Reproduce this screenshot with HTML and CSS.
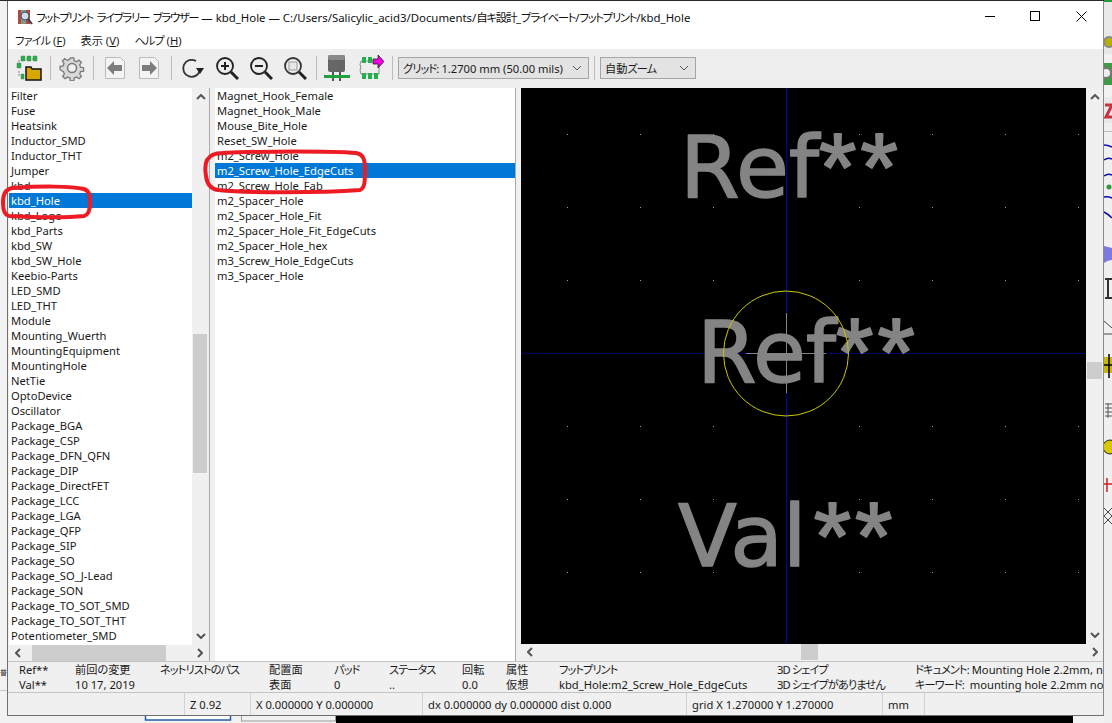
FILE: index.html
```html
<!DOCTYPE html>
<html lang="ja">
  <head>
    <meta charset="UTF-8" />
    <title>フットプリント ライブラリー ブラウザー</title>
    <link rel="stylesheet" href="styles.css">
  </head>
  <body>
    <svg class="backdrop" width="1112" height="723" viewBox="0 0 1112 723">
      <rect width="1112" height="723" fill="#f2f2f2" />
      <rect width="1112" height="1" fill="#2a2a2a" />
      <rect x="1104" width="8" height="2" fill="#1e9e3a" />
      <rect x="0" y="690" width="8" height="1" fill="#c8c8c8" />
      <text x="0" y="675" font-size="7" font-family="Noto Sans CJK JP, sans-serif" fill="#222">普</text>
      <rect x="145.500" y="712" width="85" height="8" fill="#fff" stroke="#1f5fa8" stroke-width="1.500" />
      <rect x="241.500" y="712" width="94" height="9" fill="#f2f2f2" stroke="#9a9a9a" />
      <rect x="336" y="715" width="737" height="8" fill="#000" />
      <rect x="1104" y="2" width="8" height="52" fill="#e8e8e8" />
      <circle cx="1109" cy="42" r="5" fill="#b8b000" stroke="#888" stroke-width="2" />
      <rect x="1104" y="63" width="8" height="22" fill="#3f9a48" />
      <circle cx="1106" cy="73" r="5" fill="#eee" stroke="#777" stroke-width="2" />
      <rect x="1104" y="97" width="8" height="26" fill="#e9e9e9" />
      <path d="M1105 105h7l-6 12h6" fill="none" stroke="#c8323c" stroke-width="3" />
      <rect x="1104" y="123" width="8" height="600" fill="#f0f0f0" />
      <rect x="1104" y="131" width="8" height="1" fill="#bbb" />
      <path d="M1104 145q4 0 8 2M1104 160q4-3 8-1M1104 176q4-3 8-1M1104 197q4-1 8 1M1104 212q4 2 8 6" fill="none" stroke="#0a0ab0" stroke-width="1.500" />
      <circle cx="1109" cy="187" r="2.500" fill="#2a9a3a" />
      <path d="M1104 246q4 1 8 2v12q-4 0-8 3z" fill="#7a7ae0" />
      <path d="M1105 279h7M1105 298h7M1108 279v19" fill="none" stroke="#333" stroke-width="2" />
      <path d="M1104 321l8 7M1104 334h8" fill="none" stroke="#444" />
      <rect x="1104" y="357" width="8" height="16" fill="#c8b800" />
      <path d="M1109 354v24M1104 365h8" stroke="#000" stroke-width="1.500" />
      <path d="M1105 404h7M1105 408h7M1105 412h7M1105 416h7M1108 403v15" stroke="#555" fill="none" />
      <circle cx="1110" cy="447" r="7" fill="#d8c800" stroke="#222" />
      <path d="M1104 484h8M1107 478v14" stroke="#d02020" stroke-width="1.500" />
      <path d="M1104 508l8 8M1112 508l-8 8M1104 516l8 8M1112 516l-8 8" stroke="#444" fill="none" />
    </svg>

    <div class="window">
      <div class="titlebar">
        <svg class="app-icon" width="16" height="16" viewBox="0 0 16 16">
          <rect x="1" y="1" width="12" height="14" fill="#b04a3a" />
          <rect x="4" y="1" width="5" height="14" fill="#7a9a8a" />
          <circle cx="8" cy="7" r="4" fill="#cfe0ea" stroke="#34507a" />
          <path d="M11 10l4 5" stroke="#2a3a5a" stroke-width="2" />
        </svg>
        <span class="title-text"><span class="tight">フットプリント ライブラリー ブラウザー</span> — kbd_Hole — C:/Users/Salicylic_acid3/Documents/<span class="tight">自キ設計</span>_<span class="tight">プライベート</span>/<span class="tight">フットプリント</span>/kbd_Hole</span>
        <div class="win-buttons">
          <svg width="46" height="30" viewBox="0 0 46 30"><path d="M13 15.500h10" stroke="#000" /></svg>
          <svg width="46" height="30" viewBox="0 0 46 30"><rect x="12.500" y="10.500" width="9" height="9" fill="none" stroke="#000" /></svg>
          <svg width="46" height="30" viewBox="0 0 46 30"><path d="M12.500 10.500l10 10M22.500 10.500l-10 10" stroke="#000" fill="none" /></svg>
        </div>
      </div>

      <div class="menubar">
        <span><span class="tight">ファイル</span> (<u>F</u>)</span>
        <span>表示 (<u>V</u>)</span>
        <span><span class="tight">ヘルプ</span> (<u>H</u>)</span>
      </div>

      <div class="toolbar">
        <div class="tool">
          <svg width="26" height="26" viewBox="0 0 26 26">
            <path d="M3 5v5M3 16v5M7 4h14" stroke="#888" fill="none" stroke-dasharray="2 1" />
            <path d="M5 1h4v5H5zM11 1h4v5h-4zM17 1h4v5h-4zM1 8h4v5H1zM5 19h3v5H5z" fill="#22b04a" stroke="#5a8a5a" stroke-width="0.500" />
            <path d="M10 12h5l1 2h9v11H10z" fill="#d8a800" stroke="#111" stroke-width="1.500" />
          </svg>
        </div>
        <div class="tool-sep"></div>
        <div class="tool">
          <svg width="26" height="26" viewBox="0 0 26 26">
            <path d="M11 1h4l.6 3.500 2.700 1.100 2.900-2 2.800 2.800-2 2.900 1.100 2.700 3.500.6v4l-3.500.6-1.100 2.700 2 2.900-2.800 2.800-2.900-2-2.700 1.100-.6 3.500h-4l-.6-3.500-2.700-1.100-2.900 2-2.800-2.800 2-2.900-1.100-2.700L-1 15v-4l3.500-.6 1.100-2.700-2-2.900 2.800-2.800 2.900 2 2.700-1.100z" transform="translate(2 2) scale(.85)" fill="#d8d8d8" stroke="#777" stroke-width="1.500" />
            <circle cx="13" cy="13" r="4.500" fill="#f0f0f0" stroke="#777" stroke-width="1.500" />
          </svg>
        </div>
        <div class="tool-sep"></div>
        <div class="tool">
          <svg width="22" height="24" viewBox="0 0 22 24">
            <path d="M1.500 1.500h15l4 4v17h-19z" fill="#f4f4f4" stroke="#bbb" />
            <path d="M3 12l7-7v4h8v6h-8v4z" fill="#7d7d7d" />
          </svg>
        </div>
        <div class="tool">
          <svg width="22" height="24" viewBox="0 0 22 24">
            <path d="M1.500 1.500h15l4 4v17h-19z" fill="#f4f4f4" stroke="#bbb" />
            <path d="M19 12l-7-7v4H4v6h8v4z" fill="#7d7d7d" />
          </svg>
        </div>
        <div class="tool-sep wide"></div>
        <div class="tool">
          <svg width="24" height="24" viewBox="0 0 24 24">
            <path d="M19 14a8.500 8.500 0 1 1-4-9" fill="none" stroke="#333" stroke-width="1.800" />
            <path d="M15 13h8l-4 6z" fill="#222" transform="translate(0 -1)" />
          </svg>
        </div>
        <div class="tool">
          <svg width="24" height="24" viewBox="0 0 24 24">
            <circle cx="10" cy="10" r="8" fill="none" stroke="#222" stroke-width="1.800" />
            <path d="M6 10h8M10 6v8" stroke="#222" stroke-width="2" />
            <path d="M16 16l7 7" stroke="#222" stroke-width="3" />
          </svg>
        </div>
        <div class="tool">
          <svg width="24" height="24" viewBox="0 0 24 24">
            <circle cx="10" cy="10" r="8" fill="none" stroke="#222" stroke-width="1.800" />
            <path d="M6 10h8" stroke="#222" stroke-width="2" />
            <path d="M16 16l7 7" stroke="#222" stroke-width="3" />
          </svg>
        </div>
        <div class="tool">
          <svg width="24" height="24" viewBox="0 0 24 24">
            <circle cx="10" cy="10" r="8" fill="none" stroke="#333" stroke-width="1.800" />
            <rect x="6" y="6" width="8" height="8" fill="#e8e8e8" stroke="#999" />
            <path d="M16 16l7 7" stroke="#222" stroke-width="3" />
          </svg>
        </div>
        <div class="tool-sep thin"></div>
        <div class="tool">
          <svg width="28" height="28" viewBox="0 0 28 28">
            <rect x="5" y="1" width="17" height="17" rx="2" fill="#666" />
            <rect x="5" y="1" width="17" height="5" rx="2" fill="#8a8a8a" />
            <path d="M10 18v3M17 18v3M10 24v3M17 24v3" stroke="#222" stroke-width="1.500" />
            <rect x="1" y="21" width="26" height="3" fill="#1ea03a" />
          </svg>
        </div>
        <div class="tool">
          <svg width="26" height="26" viewBox="0 0 26 26">
            <path d="M3 6q-2 4 0 6-2 3 0 7h18V6z" fill="none" stroke="#888" />
            <path d="M4 2h4v6H4zM10 2h4v6h-4zM4 18h4v6H4zM10 18h4v6h-4zM16 18h4v6h-4z" fill="#22b04a" />
            <path d="M15 4h5V0l6 6.500-6 6.500V9h-5z" fill="#f000e0" stroke="#222" stroke-width="0.800" />
          </svg>
        </div>
        <div class="tool-sep"></div>
        <div class="combo grid-combo">
          <span><span class="tight">グリッド:</span> 1.2700 mm (50.00 mils)</span>
          <svg class="combo-arrow" width="10" height="6" viewBox="0 0 10 6"><path d="M1 1l4 4 4-4" fill="none" stroke="#555" /></svg>
        </div>
        <div class="tool-sep combo-gap"></div>
        <div class="combo zoom-combo">
          <span>自動<span class="tight">ズーム</span></span>
          <svg class="combo-arrow" width="10" height="6" viewBox="0 0 10 6"><path d="M1 1l4 4 4-4" fill="none" stroke="#555" /></svg>
        </div>
      </div>

      <div class="panes">
        <div class="lib-pane">
          <div class="lib-body">
            <ul class="list">
              <li>Filter</li>
              <li>Fuse</li>
              <li>Heatsink</li>
              <li>Inductor_SMD</li>
              <li>Inductor_THT</li>
              <li>Jumper</li>
              <li>kbd</li>
              <li class="selected">kbd_Hole</li>
              <li>kbd_Logo</li>
              <li>kbd_Parts</li>
              <li>kbd_SW</li>
              <li>kbd_SW_Hole</li>
              <li>Keebio-Parts</li>
              <li>LED_SMD</li>
              <li>LED_THT</li>
              <li>Module</li>
              <li>Mounting_Wuerth</li>
              <li>MountingEquipment</li>
              <li>MountingHole</li>
              <li>NetTie</li>
              <li>OptoDevice</li>
              <li>Oscillator</li>
              <li>Package_BGA</li>
              <li>Package_CSP</li>
              <li>Package_DFN_QFN</li>
              <li>Package_DIP</li>
              <li>Package_DirectFET</li>
              <li>Package_LCC</li>
              <li>Package_LGA</li>
              <li>Package_QFP</li>
              <li>Package_SIP</li>
              <li>Package_SO</li>
              <li>Package_SO_J-Lead</li>
              <li>Package_SON</li>
              <li>Package_TO_SOT_SMD</li>
              <li>Package_TO_SOT_THT</li>
              <li>Potentiometer_SMD</li>
            </ul>
            <div class="vscroll">
              <svg width="10" height="6" viewBox="0 0 10 6"><path d="M1 5l4-4 4 4" fill="none" stroke="#555" stroke-width="2" /></svg>
              <div class="track lib-track"><div class="thumb"></div></div>
              <svg width="10" height="6" viewBox="0 0 10 6"><path d="M1 1l4 4 4-4" fill="none" stroke="#555" stroke-width="2" /></svg>
            </div>
          </div>
          <div class="hscroll lib-hscroll">
            <svg width="6" height="10" viewBox="0 0 6 10"><path d="M5 1L1 5l4 4" fill="none" stroke="#555" stroke-width="2" /></svg>
            <div class="htrack"><div class="hthumb lib-thumb"></div></div>
            <svg width="6" height="10" viewBox="0 0 6 10"><path d="M1 1l4 4-4 4" fill="none" stroke="#555" stroke-width="2" /></svg>
          </div>
        </div>

        <ul class="list fp-list">
          <li>Magnet_Hook_Female</li>
          <li>Magnet_Hook_Male</li>
          <li>Mouse_Bite_Hole</li>
          <li>Reset_SW_Hole</li>
          <li>m2_Screw_Hole</li>
          <li class="selected">m2_Screw_Hole_EdgeCuts</li>
          <li>m2_Screw_Hole_Fab</li>
          <li>m2_Spacer_Hole</li>
          <li>m2_Spacer_Hole_Fit</li>
          <li>m2_Spacer_Hole_Fit_EdgeCuts</li>
          <li>m2_Spacer_Hole_hex</li>
          <li>m3_Screw_Hole_EdgeCuts</li>
          <li>m3_Spacer_Hole</li>
        </ul>

        <div class="view-pane">
          <div class="view-row">
            <svg class="canvas" width="565" height="556" viewBox="521 88 565 556">
              <defs>
                <pattern id="grid" x="786" y="353" width="73" height="73" patternUnits="userSpaceOnUse">
                  <rect width="1" height="1" fill="#9a9a9a" />
                </pattern>
              </defs>
              <rect x="521" y="88" width="565" height="556" fill="#000" />
              <rect x="521" y="88" width="565" height="556" fill="url(#grid)" />
              <path d="M521 353.500h565" stroke="#00006a" />
              <path d="M786.500 88v556" stroke="#0000b0" />
              <g class="silk">
                <text x="680" y="197">Ref<tspan class="stars" dy="3">**</tspan></text>
                <text x="697" y="382">Ref<tspan class="stars" dy="3">**</tspan></text>
                <text x="678" y="566">Val<tspan class="stars" dx="7" dy="3">**</tspan></text>
              </g>
              <path d="M746 353.500h80M786.500 313v80" stroke="#848484" />
              <circle cx="786" cy="353.500" r="62.500" fill="none" stroke="#c8c800" />
            </svg>
            <div class="vscroll view-vscroll">
              <svg width="10" height="6" viewBox="0 0 10 6"><path d="M1 5l4-4 4 4" fill="none" stroke="#555" stroke-width="2" /></svg>
              <div class="track view-track"><div class="thumb"></div></div>
              <svg width="10" height="6" viewBox="0 0 10 6"><path d="M1 1l4 4 4-4" fill="none" stroke="#555" stroke-width="2" /></svg>
            </div>
          </div>
          <div class="hscroll view-hscroll">
            <svg width="6" height="10" viewBox="0 0 6 10"><path d="M5 1L1 5l4 4" fill="none" stroke="#555" stroke-width="2" /></svg>
            <div class="htrack"><div class="hthumb view-thumb"></div></div>
            <svg width="6" height="10" viewBox="0 0 6 10"><path d="M1 1l4 4-4 4" fill="none" stroke="#555" stroke-width="2" /></svg>
          </div>
        </div>
      </div>

      <div class="msg-panel">
        <div class="msg-col c-ref"><span>Ref**</span><span>Val**</span></div>
        <div class="msg-col c-date"><span>前回の変更</span><span>10 17, 2019</span></div>
        <div class="msg-col c-net"><span class="tight">ネットリストのパス</span><span></span></div>
        <div class="msg-col c-side"><span>配置面</span><span>表面</span></div>
        <div class="msg-col c-pad"><span class="tight">パッド</span><span>0</span></div>
        <div class="msg-col c-status"><span class="tight">ステータス</span><span>..</span></div>
        <div class="msg-col c-rot"><span>回転</span><span>0.0</span></div>
        <div class="msg-col c-attr"><span>属性</span><span>仮想</span></div>
        <div class="msg-col c-fp"><span class="tight">フットプリント</span><span>kbd_Hole:m2_Screw_Hole_EdgeCuts</span></div>
        <div class="msg-col c-3d"><span class="tight">3D シェイプ</span><span class="tight">3D シェイプがありません</span></div>
        <div class="msg-col c-doc"><span><span class="tight">ドキュメント:</span> Mounting Hole 2.2mm, n</span><span><span class="tight">キーワード:</span> &nbsp;mounting hole 2.2mm no</span></div>
      </div>

      <div class="statusbar">
        <div class="cell s-blank"></div>
        <div class="cell s-zoom">Z 0.92</div>
        <div class="cell s-pos">X 0.000000&nbsp;Y 0.000000</div>
        <div class="cell s-delta">dx 0.000000&nbsp;dy 0.000000&nbsp;dist 0.000</div>
        <div class="cell s-grid">grid X 1.270000&nbsp;Y 1.270000</div>
        <div class="cell s-unit">mm</div>
        <div class="cell s-end"></div>
      </div>
    </div>

    <svg class="marks" width="1112" height="723" viewBox="0 0 1112 723">
      <path d="M12 188C40 186 72 186 84 189c6 2 6 8 6 14 0 7-1 12-6 13-20 2-55 1-75 0-5-1-6-6-6-13 0-7 1-13 9-15z" />
      <path d="M222 153c40-2 110-2 134 0 7 1 9 6 9 16 0 12 0 19-5 21-40 3-110 3-142 0-7-1-11-5-12-14-1-6-1-12 1-16 3-5 8-7 15-7z" />
    </svg>
  </body>
</html>
```

FILE: styles.css
```css
* {
  box-sizing: border-box;
}
body {
  margin: 0;
  width: 1112px;
  height: 723px;
  overflow: hidden;
  position: relative;
  font-family: "Noto Sans", "Noto Sans CJK JP", sans-serif;
  font-size: 11.2px;
  font-feature-settings: "palt";
  color: #1a1a1a;
}
.tight {
  letter-spacing: -0.9px;
}
.backdrop,
.marks {
  position: absolute;
  left: 0;
  top: 0;
}
.marks {
  pointer-events: none;
}
.marks path {
  fill: none;
  stroke: #ed1c24;
  stroke-width: 4;
}
.window {
  position: absolute;
  left: 7px;
  top: 1px;
  width: 1097px;
  height: 715px;
  display: flex;
  flex-direction: column;
  background: #f0f0f0;
  border-left: 1px solid #707070;
  border-right: 1px solid #8a8a8a;
  border-bottom: 1px solid #707070;
  overflow: hidden;
}

.titlebar {
  height: 31px;
  flex: none;
  display: flex;
  align-items: center;
  padding-left: 9px;
  background: #fff;
}
.app-icon {
  flex: none;
  margin-right: 3px;
}
.title-text {
  font-size: 11.4px;
  white-space: nowrap;
  color: #111;
}
.title-text .tight {
  letter-spacing: -1.3px;
  word-spacing: 2px;
}
.win-buttons {
  margin-left: auto;
  margin-right: -7px;
  margin-top: -1px;
  display: flex;
}
.win-buttons svg {
  flex: none;
}

.menubar {
  height: 17px;
  flex: none;
  display: flex;
  gap: 15px;
  align-items: center;
  padding: 0 0 2px 7px;
  background: #fff;
}

.toolbar {
  height: 38px;
  flex: none;
  display: flex;
  align-items: center;
  padding-left: 4px;
  background: #eeeeee;
}
.tool {
  width: 34px;
  height: 34px;
  flex: none;
  display: flex;
  align-items: center;
  justify-content: center;
}
.tool-sep {
  width: 9px;
  height: 24px;
  flex: none;
  background: linear-gradient(#bdbdbd, #bdbdbd) center / 1px 100% no-repeat;
}
.tool-sep.wide {
  width: 10px;
}
.tool-sep.thin {
  width: 8px;
}
.tool-sep.combo-gap {
  width: 11px;
}
.combo {
  height: 22px;
  flex: none;
  display: flex;
  align-items: center;
  justify-content: space-between;
  padding: 0 5px 0 4px;
  background: #e3e3e3;
  border: 1px solid #a5a5a5;
  white-space: nowrap;
}
.grid-combo {
  width: 191px;
  margin-left: 1px;
}
.zoom-combo {
  width: 96px;
}
.combo-arrow {
  flex: none;
  margin-right: 1px;
}

.panes {
  height: 574px;
  flex: none;
  display: flex;
  padding-top: 1px;
  background: #f0f0f0;
}
.lib-pane {
  width: 201px;
  margin-left: 1px;
  flex: none;
  display: flex;
  flex-direction: column;
  border-right: 1px solid #a8a8a8;
}
.lib-body {
  flex: 1;
  min-height: 0;
  display: flex;
}
.list {
  list-style: none;
  margin: 0;
  padding: 0;
  background: #fff;
  overflow: hidden;
}
.list li {
  height: 15px;
  line-height: 15px;
  padding-left: 2px;
  white-space: nowrap;
}
.list li.selected {
  background: #0078d7;
  color: #fff;
}
.lib-body .list {
  width: 183px;
  flex: none;
}
.fp-list {
  width: 301px;
  margin-left: 5px;
  flex: none;
  border-right: 1px solid #a8a8a8;
}

.vscroll {
  width: 17px;
  flex: none;
  display: flex;
  flex-direction: column;
  align-items: center;
  gap: 4px;
  padding: 6px 0;
  background: #f0f0f0;
}
.track {
  flex: 1;
  width: 100%;
  position: relative;
}
.thumb {
  position: absolute;
  left: 1px;
  right: 2px;
  background: #cdcdcd;
}
.lib-track .thumb {
  top: 230px;
  height: 139px;
}
.view-track .thumb {
  top: 258px;
  height: 17px;
}
.hscroll {
  height: 16px;
  flex: none;
  display: flex;
  align-items: center;
  gap: 5px;
  padding: 0 6px;
  background: #f0f0f0;
}
.htrack {
  flex: 1;
  height: 100%;
  position: relative;
}
.hthumb {
  position: absolute;
  top: 0;
  bottom: 0;
  background: #cdcdcd;
}
.lib-thumb {
  left: 6px;
  width: 134px;
}
.view-thumb {
  left: 263px;
  width: 17px;
}

.view-pane {
  width: 583px;
  margin-left: 5px;
  flex: none;
  display: flex;
  flex-direction: column;
}
.view-row {
  display: flex;
  height: 556px;
  flex: none;
}
.canvas {
  display: block;
  flex: none;
}
.view-vscroll {
  width: 18px;
}
.silk text {
  font-family: "DejaVu Sans", sans-serif;
  font-size: 86px;
  fill: #848484;
  stroke: #848484;
  stroke-width: 1.5;
  stroke-linejoin: round;
}
.silk .stars {
  font-family: "Liberation Sans", sans-serif;
  font-size: 96px;
  letter-spacing: 4px;
  stroke-width: 2;
}

.msg-panel {
  height: 31px;
  flex: none;
  display: flex;
  border-top: 1px solid #c4c4c4;
  overflow: hidden;
}
.msg-col {
  flex: none;
  display: flex;
  flex-direction: column;
  white-space: nowrap;
  line-height: 15px;
}
.msg-col span {
  height: 15px;
}
.c-ref {
  width: 56px;
  margin-left: 11px;
}
.c-date {
  width: 85px;
}
.c-net {
  width: 109px;
}
.c-side {
  width: 65px;
}
.c-pad {
  width: 55px;
}
.c-status {
  width: 73px;
}
.c-rot {
  width: 44px;
}
.c-attr {
  width: 53px;
}
.c-fp {
  width: 218px;
}
.c-3d {
  width: 138px;
}

.statusbar {
  flex: 1;
  min-height: 0;
  display: flex;
  border-top: 1px solid #c4c4c4;
}
.cell {
  flex: none;
  padding-left: 5px;
  display: flex;
  align-items: center;
  white-space: nowrap;
  border-right: 1px solid #d2d2d2;
}
.s-blank {
  width: 177px;
}
.s-zoom {
  width: 66px;
}
.s-pos {
  width: 172px;
}
.s-delta {
  width: 264px;
}
.s-grid {
  width: 196px;
}
.s-unit {
  width: 42px;
}
.s-end {
  flex: 1;
  border-right: none;
}
```
